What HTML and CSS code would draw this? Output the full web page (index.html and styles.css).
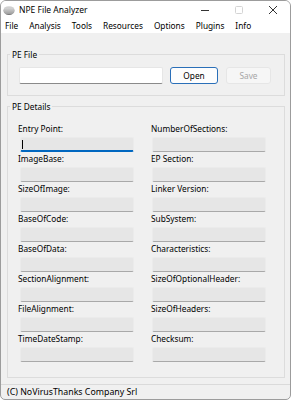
FILE: index.html
```html
<!DOCTYPE html>
<html>
<head>
<meta charset="utf-8">
<title>NPE File Analyzer</title>
<link rel="stylesheet" href="styles.css">
</head>
<body>
<div class="window">
  <div class="titlebar">
    <svg class="app-icon" width="12" height="12" viewBox="0 0 12 12">
      <defs>
        <linearGradient id="g" x1="0" y1="0" x2="0" y2="1">
          <stop offset="0" stop-color="#e4e4e4"/>
          <stop offset="1" stop-color="#6e6e6e"/>
        </linearGradient>
      </defs>
      <ellipse cx="6" cy="6.5" rx="5.6" ry="4.6" fill="url(#g)"/>
      <path d="M1.2 5h9.6M0.8 7h10.4M1.4 9h9.2" stroke="#f4f4f4" stroke-width="0.7" opacity="0.8"/>
    </svg>
    <span class="title">NPE File Analyzer</span>
    <div class="caption">
      <span class="cap"><svg width="10" height="10" viewBox="0 0 10 10"><path d="M1 5.5h8" stroke="#333" stroke-width="1"/></svg></span>
      <span class="cap"><svg width="10" height="10" viewBox="0 0 10 10"><rect x="1.5" y="1.5" width="7" height="7" rx="1" fill="none" stroke="#d4d4d4" stroke-width="1"/></svg></span>
      <span class="cap"><svg width="10" height="10" viewBox="0 0 10 10"><path d="M1 1l8 8M9 1l-8 8" stroke="#333" stroke-width="1"/></svg></span>
    </div>
  </div>
  <div class="menubar">
    <span class="menu-item">File</span>
    <span class="menu-item">Analysis</span>
    <span class="menu-item">Tools</span>
    <span class="menu-item">Resources</span>
    <span class="menu-item">Options</span>
    <span class="menu-item">Plugins</span>
    <span class="menu-item">Info</span>
  </div>
  <div class="client">
    <fieldset class="group">
      <legend class="group-title">PE File</legend>
      <div class="file-row">
        <div class="file-input"></div>
        <button class="btn btn-open">Open</button>
        <button class="btn btn-save">Save</button>
      </div>
    </fieldset>
    <fieldset class="group group-details">
      <legend class="group-title">PE Details</legend>
      <div class="fields">
        <div class="col col-left">
          <div class="field"><div class="field-label">Entry Point:</div><div class="field-box focused"><span class="caret"></span></div></div>
          <div class="field"><div class="field-label">ImageBase:</div><div class="field-box"></div></div>
          <div class="field"><div class="field-label">SizeOfImage:</div><div class="field-box"></div></div>
          <div class="field"><div class="field-label">BaseOfCode:</div><div class="field-box"></div></div>
          <div class="field"><div class="field-label">BaseOfData:</div><div class="field-box"></div></div>
          <div class="field"><div class="field-label">SectionAlignment:</div><div class="field-box"></div></div>
          <div class="field"><div class="field-label">FileAlignment:</div><div class="field-box"></div></div>
          <div class="field"><div class="field-label">TimeDateStamp:</div><div class="field-box"></div></div>
        </div>
        <div class="col col-right">
          <div class="field"><div class="field-label">NumberOfSections:</div><div class="field-box"></div></div>
          <div class="field"><div class="field-label">EP Section:</div><div class="field-box"></div></div>
          <div class="field"><div class="field-label">Linker Version:</div><div class="field-box"></div></div>
          <div class="field"><div class="field-label">SubSystem:</div><div class="field-box"></div></div>
          <div class="field"><div class="field-label">Characteristics:</div><div class="field-box"></div></div>
          <div class="field"><div class="field-label">SizeOfOptionalHeader:</div><div class="field-box"></div></div>
          <div class="field"><div class="field-label">SizeOfHeaders:</div><div class="field-box"></div></div>
          <div class="field"><div class="field-label">Checksum:</div><div class="field-box"></div></div>
        </div>
      </div>
    </fieldset>
  </div>
  <div class="statusbar">(C) NoVirusThanks Company Srl</div>
</div>
</body>
</html>
```

FILE: styles.css
```css
* { box-sizing: border-box; }
html, body { margin: 0; padding: 0; }
body {
  width: 291px;
  height: 400px;
  background: #ffffff;
  font-family: "Noto Sans", "DejaVu Sans", sans-serif;
  font-size: 8.3px;
  color: #000;
}
.window {
  width: 291px;
  height: 400px;
  border: 1px solid #9c9c9c;
  border-radius: 6px 6px 5px 5px;
  background: #f0f0f0;
  display: flex;
  flex-direction: column;
  overflow: hidden;
}
.titlebar {
  height: 18px;
  flex-shrink: 0;
  background: #ffffff;
  display: flex;
  align-items: center;
}
.app-icon { margin-left: 2px; flex-shrink: 0; }
.title { margin-left: 4px; line-height: 18px; font-size: 8.5px; }
.caption { margin-left: auto; display: flex; }
.cap {
  width: 34px;
  height: 18px;
  display: flex;
  align-items: center;
  justify-content: center;
}
.menubar {
  height: 14px;
  flex-shrink: 0;
  background: #ffffff;
  display: flex;
  align-items: center;
  padding-left: 4px;
  column-gap: 11px;
}
.menu-item { line-height: 14px; white-space: nowrap; }
.client {
  flex: 1;
  padding: 15px 5px 0 6px;
}
.group {
  margin: 0;
  padding: 0;
  border: 1px solid #dcdcdc;
  min-inline-size: 0;
}
.group-title {
  margin-left: 2px;
  padding: 0 2px;
  height: 13px;
  line-height: 13px;
}
.group-details { margin-top: 4px; }
.file-row {
  display: flex;
  align-items: flex-start;
  padding: 6px 0 11px 11px;
}
.file-input {
  width: 144px;
  height: 17px;
  background: #ffffff;
  border: 1px solid #e6e6e6;
  border-bottom-color: #8a8a8a;
  border-radius: 2px;
}
.btn {
  font: inherit;
  height: 17px;
  padding: 0;
  border-radius: 3px;
  display: flex;
  align-items: center;
  justify-content: center;
  line-height: 15px;
}
.btn-open {
  width: 48px;
  margin-left: 7px;
  background: #fdfdfd;
  border: 1px solid #2a6fb8;
  color: #000;
}
.btn-save {
  width: 45px;
  margin-left: 8px;
  background: #f6f6f6;
  border: 1px solid #e6e6e6;
  color: #a6a6a6;
}
.fields {
  display: grid;
  grid-template-columns: 116px 116px;
  column-gap: 17px;
  padding: 9px 0 15px 10px;
}
.col { display: flex; flex-direction: column; }
.field { height: 30px; }
.field-label {
  height: 14px;
  line-height: 14px;
  white-space: nowrap;
}
.field-box {
  width: 114px;
  height: 15px;
  margin-top: 1px;
  background: #e6e6e6;
  border: 1px solid #ebebeb;
  border-bottom-color: #a9a9a9;
  border-radius: 2px;
  display: flex;
  align-items: center;
}
.col-left .field-box { margin-left: 2px; }
.col-right .field-box { margin-left: 1px; }
.field-box.focused { border-bottom: 2px solid #0067c0; }
.caret {
  width: 1px;
  height: 9px;
  background: #000;
  margin-left: 1px;
}
.statusbar {
  height: 15px;
  flex-shrink: 0;
  border-top: 1px solid #dadada;
  padding-left: 6px;
  padding-top: 1px;
  line-height: 13px;
  font-size: 8.8px;
  white-space: nowrap;
}
```
